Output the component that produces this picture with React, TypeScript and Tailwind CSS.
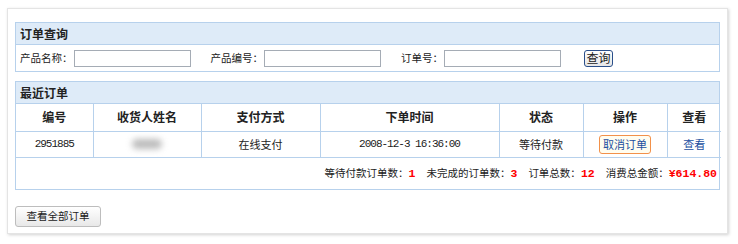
const cols = [77, 108, 119, 179, 84, 84, 54];
const heads = ["编号", "收货人姓名", "支付方式", "下单时间", "状态", "操作", "查看"];

const App = () => {
  return (
    <div className="w-[738px] h-[244px] bg-white pt-[8px] pl-[7px] font-['Noto_Sans_CJK_SC',sans-serif] text-[11px] text-[#222]">
      <div className="w-[721px] h-[226px] border border-[#e4e4e4] shadow-[1px_1px_3px_rgba(0,0,0,0.18)] bg-white pt-[13px] px-[7px]">
        {/* 订单查询 */}
        <div className="w-[705px] border border-[#b7d1ec]">
          <div className="h-[22px] bg-[#deebf8] border-b border-[#b7d1ec] flex items-center pl-[4px] text-[12px] font-bold leading-none">
            订单查询
          </div>
          <div className="h-[26px] flex items-center pl-[4px] text-[10.5px]">
            <span className="leading-none">产品名称：</span>
            <input className="ml-[1px] w-[117px] h-[17px] border border-[#a5acb5] outline-none" />
            <span className="ml-[20px] leading-none">产品编号：</span>
            <input className="ml-[1px] w-[117px] h-[17px] border border-[#a5acb5] outline-none" />
            <span className="ml-[20px] leading-none">订单号：</span>
            <input className="ml-[1px] w-[117px] h-[17px] border border-[#a5acb5] outline-none" />
            <button className="ml-[23px] w-[29px] h-[17px] border border-[#2a4f8a] rounded-[3px] bg-gradient-to-b from-white to-[#e6e6e6] text-[12px] leading-none">
              查询
            </button>
          </div>
        </div>

        {/* 最近订单 */}
        <div className="mt-[9px] w-[705px] border border-[#b7d1ec]">
          <div className="h-[22px] bg-[#deebf8] border-b border-[#b7d1ec] flex items-center pl-[4px] text-[12px] font-bold leading-none">
            最近订单
          </div>
          <table className="w-full border-collapse table-fixed">
            <colgroup>
              {cols.map((w, i) => (
                <col key={i} style={{ width: w }} />
              ))}
            </colgroup>
            <tbody>
              <tr className="h-[27px]">
                {heads.map((h, i) => (
                  <td
                    key={h}
                    className={`text-center text-[12px] font-bold border-b border-[#b7d1ec] ${i < heads.length - 1 ? "border-r" : ""}`}
                  >
                    {h}
                  </td>
                ))}
              </tr>
              <tr className="h-[26px]">
                <td className="text-center border-r border-b border-[#b7d1ec] font-['Liberation_Mono',monospace] text-[11px] tracking-[-1px]">
                  2951885
                </td>
                <td className="border-r border-b border-[#b7d1ec]">
                  <div className="mx-auto w-[30px] h-[10px] rounded-full bg-[#bcbcbc] blur-[3px]" />
                </td>
                <td className="text-center border-r border-b border-[#b7d1ec]">在线支付</td>
                <td className="text-center border-r border-b border-[#b7d1ec] font-['Liberation_Mono',monospace] text-[11px] tracking-[-1px]">
                  2008-12-3 16:36:00
                </td>
                <td className="text-center border-r border-b border-[#b7d1ec]">等待付款</td>
                <td className="text-center border-r border-b border-[#b7d1ec]">
                  <span className="inline-flex items-center h-[19px] px-[3px] border-[1.5px] border-[#f2914a] rounded-[3px] bg-[#fffdf0] text-[#1b4fa0] leading-none">
                    取消订单
                  </span>
                </td>
                <td className="text-center border-b border-[#b7d1ec] text-[#1b4fa0]">查看</td>
              </tr>
              <tr className="h-[32px]">
                <td colSpan={7} className="text-right pr-[4px] text-[10.5px]">
                  等待付款订单数：
                  <b className="text-[#f00] font-['Liberation_Mono',monospace] text-[11.5px]">1</b>
                  <span className="ml-[11px]">未完成的订单数：</span>
                  <b className="text-[#f00] font-['Liberation_Mono',monospace] text-[11.5px]">3</b>
                  <span className="ml-[11px]">订单总数：</span>
                  <b className="text-[#f00] font-['Liberation_Mono',monospace] text-[11.5px]">12</b>
                  <span className="ml-[11px]">消费总金额：</span>
                  <b className="text-[#f00] font-['Liberation_Mono',monospace] text-[11.5px]">¥614.80</b>
                </td>
              </tr>
            </tbody>
          </table>
        </div>

        <button className="mt-[16px] w-[86px] h-[21px] border border-[#bdbdbd] rounded-[3px] bg-gradient-to-b from-white to-[#e8e8e8] text-[10.5px] leading-none">
          查看全部订单
        </button>
      </div>
    </div>
  );
};

export default App;
